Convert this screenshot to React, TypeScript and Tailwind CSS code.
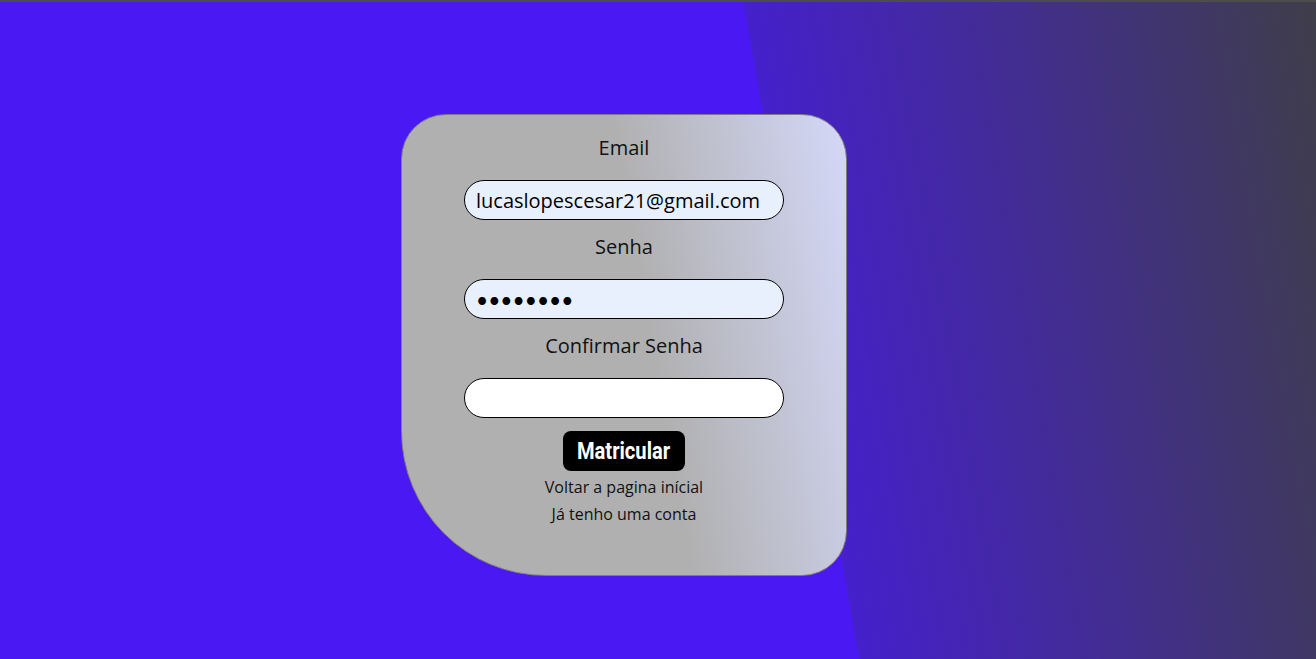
import React from "react";

const labelCls = "text-[20px] leading-[27px] text-[#111] mb-[19px]";
const inputCls =
  "w-[320px] h-[40px] rounded-[20px] border border-black px-[11px] text-[20px] text-black outline-none";

export default function App() {
  return (
    <div
      className="min-h-screen w-full flex flex-col"
      style={{ fontFamily: "'Open Sans', 'Noto Sans', sans-serif" }}
    >
      <div className="h-[2px] bg-[#4d4d4d]" />
      <div className="flex-1 bg-[linear-gradient(80deg,#4a18f2_60%,#4520cc_60%,#3f3e4a_100%)] flex items-start">
        <div className="ml-[401px] mt-[112px] w-[446px] h-[462px] border border-[#7d7d7d] rounded-tl-[45px] rounded-tr-[45px] rounded-br-[45px] rounded-bl-[145px] bg-[linear-gradient(80deg,#b0b0b0_55%,#d4d8f8_100%)] flex flex-col items-center pt-[19px]">
          <label className={labelCls}>Email</label>
          <input
            type="email"
            defaultValue="lucaslopescesar21@gmail.com"
            className={inputCls + " bg-[#e8f0fe]"}
          />
          <label className={labelCls + " mt-[13px]"}>Senha</label>
          <input
            type="password"
            defaultValue="12345678"
            className={inputCls + " bg-[#e8f0fe] font-[Lato] text-[21px]"}
          />
          <label className={labelCls + " mt-[13px]"}>Confirmar Senha</label>
          <input type="password" className={inputCls + " bg-white"} />
          <button className="mt-[13px] h-[40px] w-[122px] rounded-[8px] bg-black text-white flex items-center justify-center">
            <span
              className="inline-block text-[24px] font-bold scale-x-[0.84]"
              style={{ fontFamily: "Roboto, sans-serif" }}
            >
              Matricular
            </span>
          </button>
          <a href="#" className="mt-[5px] text-[16px] leading-[22px] text-[#111]">
            Voltar a pagina inícial
          </a>
          <a href="#" className="mt-[5px] text-[16px] leading-[22px] text-[#111]">
            Já tenho uma conta
          </a>
        </div>
      </div>
    </div>
  );
}
